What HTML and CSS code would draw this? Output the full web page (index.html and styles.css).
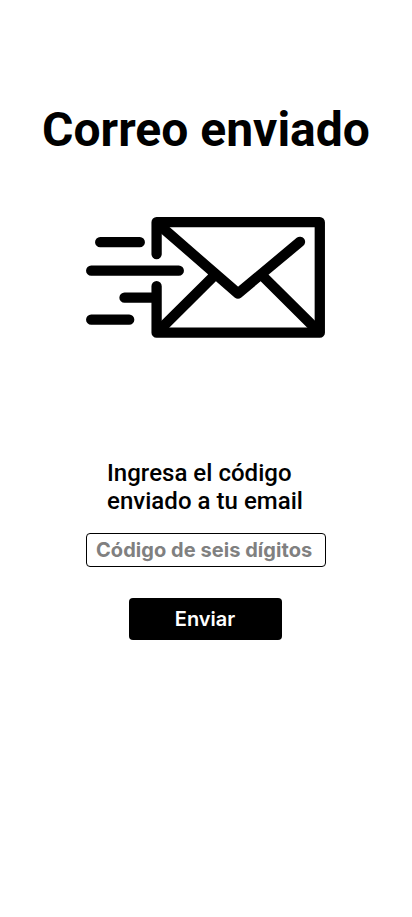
FILE: index.html
```html
<!DOCTYPE html>
<html lang="es">
<head>
<meta charset="utf-8">
<meta name="viewport" content="width=device-width, initial-scale=1">
<title>Correo enviado</title>
<link rel="stylesheet" href="styles.css">
</head>
<body>
<main class="screen">
  <h1 class="title">Correo enviado</h1>
  <svg class="mail" viewBox="0 0 240 122" aria-hidden="true">
    <path d="M70.6 37V5.2H233.8V115.7H70.6V69.2"/>
    <path d="M71.5 6.5L152 76.5L214 24.8M72 114.5L129.5 57.3M232.5 114.5L175 57.3"/>
    <path d="M14.2 25.2H53.8M5.2 53.7H92.8M38.5 80.7H69M5.2 102.7H43.2"/>
  </svg>
  <form class="form">
    <label class="label" for="code">Ingresa el código<br>enviado a tu email</label>
    <input class="code" id="code" type="text" placeholder="Código de seis dígitos">
    <button class="submit" type="button">Enviar</button>
  </form>
</main>
</body>
</html>
```
FILE: styles.css
```css
* { box-sizing: border-box; }
body { margin: 0; background: #fff; color: #000; }
.screen { display: flex; flex-direction: column; align-items: center; min-height: 917px; padding-top: 102px; }
.title { margin: 0; font: 700 48px/56px Roboto, sans-serif; white-space: nowrap; }
.mail { width: 240px; height: 122px; margin-top: 59px; fill: none; stroke: #000; stroke-width: 10.3; stroke-linecap: round; stroke-linejoin: round; }
.form { display: flex; flex-direction: column; align-items: center; width: 240px; margin-top: 120px; }
.label { width: 198px; font: 500 24px/28px Roboto, sans-serif; letter-spacing: 0.03px; white-space: nowrap; }
.code { width: 240px; height: 34px; margin-top: 18px; padding: 0 9px; border: 1px solid #000; border-radius: 4px; background: #fff; font: 700 20px/24px Inter, sans-serif; letter-spacing: 0.05px; }
.code::placeholder { color: #808080; opacity: 1; }
.submit { width: 153px; height: 42px; margin: 31px 1px 0 0; padding: 0 1px 0 0; border: 0; border-radius: 4px; background: #000; color: #fff; font: 600 20px/24px Inter, sans-serif; }
```
